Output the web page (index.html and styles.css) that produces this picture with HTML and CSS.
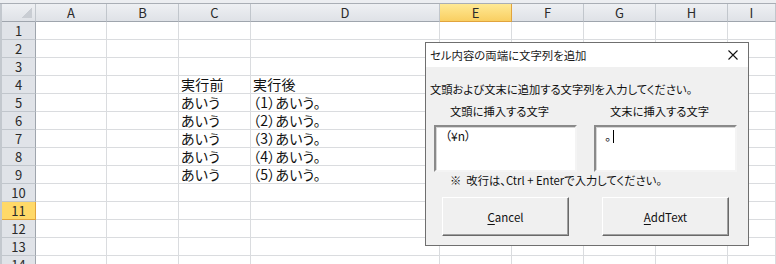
FILE: index.html
```html
<!DOCTYPE html>
<html lang="ja">
  <head>
    <meta charset="utf-8" />
    <title>セル内容の両端に文字列を追加</title>
    <link rel="stylesheet" href="styles.css">
  </head>
  <body>
    <div class="window">
      <div class="formula-edge"></div>

      <table class="sheet">
        <colgroup>
          <col class="w-head"><col class="w-a"><col class="w-std"><col class="w-std">
          <col class="w-d"><col class="w-std"><col class="w-std"><col class="w-std">
          <col class="w-std"><col class="w-i">
        </colgroup>
        <thead>
          <tr>
            <th class="corner"></th><th>A</th><th>B</th><th>C</th><th>D</th>
            <th class="selected">E</th><th>F</th><th>G</th><th>H</th><th>I</th>
          </tr>
        </thead>
        <tbody>
          <tr><th>1</th><td></td><td></td><td></td><td></td><td></td><td></td><td></td><td></td><td></td></tr>
          <tr><th>2</th><td></td><td></td><td></td><td></td><td></td><td></td><td></td><td></td><td></td></tr>
          <tr><th>3</th><td></td><td></td><td></td><td></td><td></td><td></td><td></td><td></td><td></td></tr>
          <tr><th>4</th><td></td><td></td><td>実行前</td><td>実行後</td><td></td><td></td><td></td><td></td><td></td></tr>
          <tr><th>5</th><td></td><td></td><td>あいう</td><td>（1）あいう。</td><td></td><td></td><td></td><td></td><td></td></tr>
          <tr><th>6</th><td></td><td></td><td>あいう</td><td>（2）あいう。</td><td></td><td></td><td></td><td></td><td></td></tr>
          <tr><th>7</th><td></td><td></td><td>あいう</td><td>（3）あいう。</td><td></td><td></td><td></td><td></td><td></td></tr>
          <tr><th>8</th><td></td><td></td><td>あいう</td><td>（4）あいう。</td><td></td><td></td><td></td><td></td><td></td></tr>
          <tr><th>9</th><td></td><td></td><td>あいう</td><td>（5）あいう。</td><td></td><td></td><td></td><td></td><td></td></tr>
          <tr><th>10</th><td></td><td></td><td></td><td></td><td></td><td></td><td></td><td></td><td></td></tr>
          <tr><th class="selected">11</th><td></td><td></td><td></td><td></td><td></td><td></td><td></td><td></td><td></td></tr>
          <tr><th>12</th><td></td><td></td><td></td><td></td><td></td><td></td><td></td><td></td><td></td></tr>
          <tr><th>13</th><td></td><td></td><td></td><td></td><td></td><td></td><td></td><td></td><td></td></tr>
          <tr><th>14</th><td></td><td></td><td></td><td></td><td></td><td></td><td></td><td></td><td></td></tr>
        </tbody>
      </table>

      <!-- the userform sits over the sheet -->
      <div class="dialog">
        <div class="dialog-title">
          <span>セル内容の両端に文字列を追加</span>
          <svg class="close" width="10" height="10" viewBox="0 0 10 10">
            <path d="M0.5 0.5 L9.5 9.5 M9.5 0.5 L0.5 9.5" stroke="#111" stroke-width="1.1" fill="none" />
          </svg>
        </div>
        <div class="dialog-body">
          <p class="prompt">文頭および文末に追加する文字列を入力してください。</p>
          <div class="fields">
            <div class="field">
              <div class="field-label">文頭に挿入する文字</div>
              <div class="textbox">（¥n）</div>
            </div>
            <div class="field">
              <div class="field-label">文末に挿入する文字</div>
              <div class="textbox">。<span class="caret"></span></div>
            </div>
          </div>
          <p class="note">※&nbsp;&nbsp;改行は、Ctrl + Enterで入力してください。</p>
          <div class="buttons">
            <button class="btn"><u>C</u>ancel</button>
            <button class="btn"><u>A</u>ddText</button>
          </div>
        </div>
      </div>
    </div>
  </body>
</html>
```

FILE: styles.css
```css
body {
  margin: 0;
  background: #fff;
  font-family: "Noto Sans CJK JP", "DejaVu Sans", sans-serif;
  color: #111;
}

.window {
  position: relative;
  width: 776px;
  height: 264px;
  overflow: hidden;
}

.formula-edge {
  height: 3px;
  background: #eceef1;
  border-bottom: 1px solid #a9aeb5;
}

/**
 * The worksheet grid
 */
.sheet {
  table-layout: fixed;
  width: 774px;
  border-collapse: separate;
  border-spacing: 0;
  border-left: 2px solid #c3c8ce;
}

.w-head { width: 34px; }
.w-a { width: 71px; }
.w-std { width: 72px; }
.w-d { width: 189px; }
.w-i { width: 48px; }

.sheet td,
.sheet th {
  box-sizing: border-box;
  height: 18px;
  padding: 0;
  line-height: 17px;
  white-space: nowrap;
}

.sheet td {
  padding-left: 2px;
  border-right: 1px solid #dadcdf;
  border-bottom: 1px solid #dadcdf;
  font-size: 14px;
  font-feature-settings: "palt";
  letter-spacing: 0.2px;
  text-align: left;
  vertical-align: bottom;
}

.sheet thead th {
  font-weight: normal;
  font-size: 13px;
  color: #2a2a2a;
  background: linear-gradient(#eef0f3, #dfe2e7);
  border-right: 1px solid #c1c6cc;
  border-bottom: 1px solid #9fa5ad;
}

.sheet tbody th {
  font-weight: normal;
  font-size: 13px;
  color: #2a2a2a;
  background: #e0e3e8;
  border-right: 1px solid #9fa5ad;
  border-bottom: 1px solid #c1c6cc;
}

.sheet thead th.selected {
  background: linear-gradient(#ffe995, #f9cf62);
  border-right-color: #e1a43d;
  border-bottom-color: #e1a43d;
}

.sheet tbody th.selected {
  background: #ffd968;
  border-right-color: #e1a43d;
  border-bottom-color: #e1a43d;
}

.corner {
  position: relative;
}

.corner::after {
  content: "";
  position: absolute;
  right: 3px;
  bottom: 3px;
  width: 10px;
  height: 10px;
  background: linear-gradient(to bottom right, transparent 50%, #c9cdd3 50%);
}

/**
 * The userform
 */
.dialog {
  position: absolute;
  left: 425px;
  top: 42px;
  width: 324px;
  height: 204px;
  box-sizing: border-box;
  border: 1px solid #6f6f6f;
  background: #f0f0f0;
  font-size: 11.3px;
  font-feature-settings: "palt";
}

.dialog-title {
  display: flex;
  align-items: center;
  justify-content: space-between;
  height: 24px;
  padding: 0 10px 0 4px;
  background: #fff;
  font-size: 11.4px;
  color: #1a1a1a;
}

.close {
  display: block;
}

.dialog-body {
  padding: 0 8px;
}

.prompt {
  margin: 15px 0 0 -4px;
  line-height: 14px;
}

.fields {
  display: flex;
  gap: 17px;
  margin-top: 8px;
}

.field {
  width: 143px;
}

.field-label {
  height: 21px;
  line-height: 15px;
  padding-left: 16px;
}

.textbox {
  box-sizing: border-box;
  height: 47px;
  padding: 2px 0 0 9px;
  line-height: 14px;
  font-size: 12px;
  background: #fff;
  border: 2px solid;
  border-color: #8a8a8a #f4f4f4 #f4f4f4 #8a8a8a;
  box-shadow: inset 1px 1px 0 #d6d6d6;
}

.caret {
  display: inline-block;
  width: 1px;
  height: 13px;
  margin-left: 2px;
  background: #000;
  vertical-align: -2px;
}

.note {
  margin: 1px 0 0 16px;
  line-height: 14px;
}

.buttons {
  display: flex;
  gap: 33px;
  margin: 10px 0 0 8px;
}

.btn {
  box-sizing: border-box;
  width: 127px;
  height: 39px;
  padding: 0;
  background: #f0f0f0;
  border: 1px solid;
  border-color: #fff #696969 #696969 #fff;
  box-shadow: inset -1px -1px 0 #a0a0a0;
  font-family: "Noto Sans CJK JP", "DejaVu Sans", sans-serif;
  font-size: 11.5px;
  color: #111;
}

.btn u {
  text-underline-offset: 2px;
}
```
